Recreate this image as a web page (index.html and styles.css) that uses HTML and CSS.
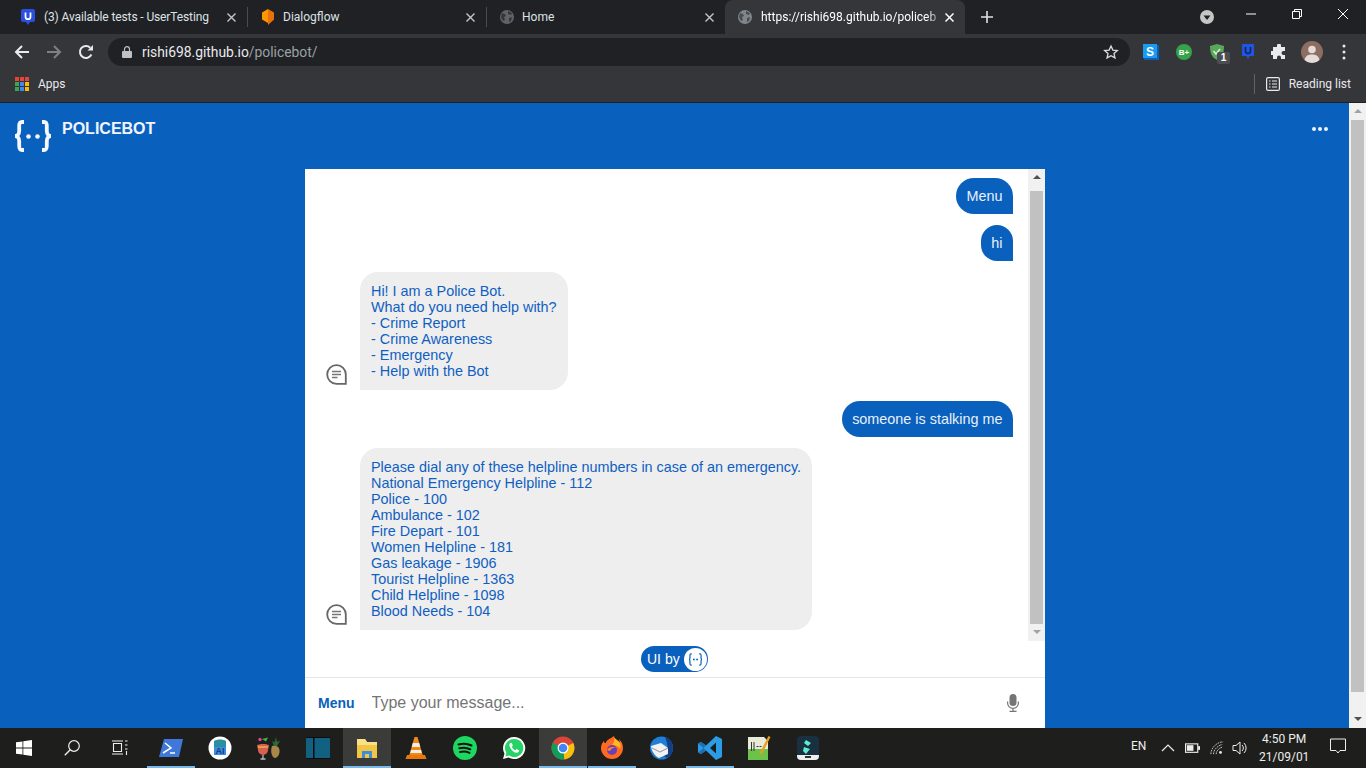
FILE: index.html
```html
<!DOCTYPE html>
<html lang="en">
<head>
  <meta charset="UTF-8" />
  <title>Policebot</title>
  <link rel="stylesheet" href="styles.css">
</head>
<body>

  <div class="tabstrip">
    <div class="tab first">
      <svg class="favicon" viewBox="0 0 14 16"><path d="M2 0h10a2 2 0 0 1 2 2v9a2 2 0 0 1-2 2H9l-2 3-2-3H2a2 2 0 0 1-2-2V2a2 2 0 0 1 2-2z" fill="#2b50e0"/><path d="M4.500 3.500v4.200a2.500 2.500 0 0 0 5 0V3.500" fill="none" stroke="#fff" stroke-width="1.700"/></svg>
      <span class="tab-title">(3) Available tests - UserTesting</span>
      <svg class="tab-close" viewBox="0 0 9 9"><path d="M.5.500l8 8M8.500.500l-8 8" stroke="#c4c7c5" stroke-width="1.400"/></svg>
    </div>
    <div class="tab-sep"></div>
    <div class="tab">
      <svg class="favicon" viewBox="0 0 14 16"><path d="M7 0l6 3.500v7L7 16z" fill="#e8710a"/><path d="M7 0L1 3.500v7L7 14z" fill="#ff9800"/></svg>
      <span class="tab-title">Dialogflow</span>
      <svg class="tab-close" viewBox="0 0 9 9"><path d="M.5.500l8 8M8.500.500l-8 8" stroke="#c4c7c5" stroke-width="1.400"/></svg>
    </div>
    <div class="tab-sep"></div>
    <div class="tab">
      <svg class="favicon" viewBox="0 0 14 14"><circle cx="7" cy="7" r="7" fill="#5f6368"/><path d="M2 3l3 1 1 2-2 1 1 3-2 1-2-4zM8 1l4 2-1 2-3-1zM9 8l3-1-1 4-2 1z" fill="#35363a"/></svg>
      <span class="tab-title">Home</span>
      <svg class="tab-close" viewBox="0 0 9 9"><path d="M.5.500l8 8M8.500.500l-8 8" stroke="#c4c7c5" stroke-width="1.400"/></svg>
    </div>
    <div class="tab active">
      <svg class="favicon" viewBox="0 0 14 14"><circle cx="7" cy="7" r="7" fill="#80868b"/><path d="M2 3l3 1 1 2-2 1 1 3-2 1-2-4zM8 1l4 2-1 2-3-1zM9 8l3-1-1 4-2 1z" fill="#4a4c50"/></svg>
      <span class="tab-title active-title">https://rishi698.github.io/policeb</span>
      <svg class="tab-close" viewBox="0 0 9 9"><path d="M.5.500l8 8M8.500.500l-8 8" stroke="#fff" stroke-width="1.500"/></svg>
    </div>
    <svg class="new-tab" viewBox="0 0 12 12"><path d="M6 0v12M0 6h12" stroke="#dee1e6" stroke-width="1.600"/></svg>
    <div class="window-controls">
      <svg class="profile-down" viewBox="0 0 14 14"><circle cx="7" cy="7" r="7" fill="#c4c7c5"/><path d="M3.500 5.500h7L7 10z" fill="#202124"/></svg>
      <svg class="win-btn" viewBox="0 0 10 10"><path d="M0 5h10" stroke="#fff"/></svg>
      <svg class="win-btn" viewBox="0 0 10 10"><path d="M.5 2.500h7v7h-7zM2.500 2.500v-2h7v7h-2" fill="none" stroke="#fff"/></svg>
      <svg class="win-btn" viewBox="0 0 10 10"><path d="M0 0l10 10M10 0L0 10" stroke="#fff"/></svg>
    </div>
  </div>

  <div class="toolbar">
    <svg class="nav-icon" viewBox="0 0 16 16"><path d="M15 8H2M8 2L2 8l6 6" fill="none" stroke="#e8eaed" stroke-width="2"/></svg>
    <svg class="nav-icon" viewBox="0 0 16 16"><path d="M1 8h13M8 2l6 6-6 6" fill="none" stroke="#7e8084" stroke-width="2"/></svg>
    <svg class="nav-icon" viewBox="0 0 16 16"><path d="M13.400 10.500A6 6 0 1 1 12.200 3.700" fill="none" stroke="#e8eaed" stroke-width="2"/><path d="M9.500 6.500H15V1z" fill="#e8eaed"/></svg>
    <div class="omnibox">
      <svg class="lock" viewBox="0 0 10 12"><path d="M2.500 5V3.200a2.500 2.500 0 0 1 5 0V5" fill="none" stroke="#bdc1c6" stroke-width="1.200"/><rect y="5" width="10" height="7" rx="1" fill="#bdc1c6"/></svg>
      <span class="url">rishi698.github.io<span class="url-path">/policebot/</span></span>
      <svg class="star" viewBox="0 0 24 24"><path d="M12 3l2.800 6.100 6.700.7-5 4.500 1.400 6.600L12 17.500 6.100 20.900l1.400-6.600-5-4.500 6.700-.7z" fill="none" stroke="#dadce0" stroke-width="2"/></svg>
    </div>
    <div class="extensions">
      <svg class="ext" viewBox="0 0 16 16"><rect x="1" y="1" width="15" height="15" fill="#0a5fb0"/><rect width="14" height="14" fill="#1a9af0"/><text x="7" y="11.500" class="ext-s">S</text></svg>
      <svg class="ext" viewBox="0 0 16 16"><circle cx="8" cy="8" r="8" fill="#34a34a"/><text x="8" y="11" class="ext-b">B+</text></svg>
      <div class="ext-badged">
        <svg class="ext" viewBox="0 0 16 16"><path d="M8 0l7 2c0 6-1 11-7 14C2 13 1 8 1 2z" fill="#5aa65a"/><path d="M4.500 7l2.500 3 4-5" fill="none" stroke="#d8f0d8" stroke-width="1.500"/></svg>
        <span class="badge">1</span>
      </div>
      <svg class="ext tight" viewBox="0 0 14 16"><path d="M1 0h12v12H8.500L7 15l-1.500-3H1z" fill="#2255dd"/><path d="M4.500 3v4a2.500 2.500 0 0 0 5 0V3" fill="none" stroke="#10245e" stroke-width="1.600"/></svg>
      <svg class="ext puzzle" viewBox="0 0 16 16"><path d="M6 1.500a2 2 0 0 1 4 0V3h4v4h-1.500a2 2 0 0 0 0 4H14v4H10v-1.500a2 2 0 0 0-4 0V15H2v-4H.5a2 2 0 0 1 0-4H2V3h4z" fill="#e8eaed"/></svg>
      <svg class="avatar" viewBox="0 0 22 22"><circle cx="11" cy="11" r="11" fill="#8d6e63"/><circle cx="11" cy="8.500" r="3.800" fill="#e4dcd8"/><path d="M3.500 19c1-4.500 4-5.500 7.500-5.500s6.500 1 7.500 5.500a11 11 0 0 1-15 0z" fill="#e4dcd8"/></svg>
      <svg class="kebab" viewBox="0 0 4 16"><circle cx="2" cy="2" r="1.500" fill="#e8eaed"/><circle cx="2" cy="8" r="1.500" fill="#e8eaed"/><circle cx="2" cy="14" r="1.500" fill="#e8eaed"/></svg>
    </div>
  </div>

  <div class="bookmarks">
    <svg class="apps" viewBox="0 0 14 14">
      <rect width="4" height="4" fill="#ea4335"/><rect x="5" width="4" height="4" fill="#ea4335"/><rect x="10" width="4" height="4" fill="#ea4335"/>
      <rect y="5" width="4" height="4" fill="#34a853"/><rect x="5" y="5" width="4" height="4" fill="#4285f4"/><rect x="10" y="5" width="4" height="4" fill="#fbbc04"/>
      <rect y="10" width="4" height="4" fill="#34a853"/><rect x="5" y="10" width="4" height="4" fill="#4285f4"/><rect x="10" y="10" width="4" height="4" fill="#fbbc04"/>
    </svg>
    <span class="bookmark-label">Apps</span>
    <div class="bookmark-sep"></div>
    <svg class="reading-icon" viewBox="0 0 14 14"><rect x=".6" y=".6" width="12.800" height="12.800" rx="1.500" fill="none" stroke="#e8eaed" stroke-width="1.200"/><path d="M3 4h1.500M6 4h5M3 7h1.500M6 7h5M3 10h1.500M6 10h5" stroke="#e8eaed" stroke-width="1.200"/></svg>
    <span class="reading-label">Reading list</span>
  </div>

  <div class="page">
    <div class="site">
      <div class="site-header">
        <svg class="logo" viewBox="0 0 38 32">
          <path d="M10 2H8C5.200 2 5.200 4 5.200 6.500V11c0 3-2 5-4.200 5 2.200 0 4.200 2 4.200 5v4.500c0 2.500 0 4.500 2.800 4.500h2M28 2h2c2.800 0 2.800 2 2.800 4.500V11c0 3 2 5 4.200 5-2.200 0-4.200 2-4.200 5v4.500c0 2.500 0 4.500-2.800 4.500h-2" fill="none" stroke="#f4f7fb" stroke-width="3.800"/>
          <circle cx="14.500" cy="16.500" r="2.300" fill="#f4f7fb"/><circle cx="23.500" cy="16.500" r="2.300" fill="#f4f7fb"/>
        </svg>
        <span class="site-name">POLICEBOT</span>
        <svg class="site-menu" viewBox="0 0 16 4"><circle cx="2" cy="2" r="2" fill="#eef3fa"/><circle cx="8" cy="2" r="2" fill="#eef3fa"/><circle cx="14" cy="2" r="2" fill="#eef3fa"/></svg>
      </div>

      <div class="chat-card">
        <div class="chat-scroll">
          <div class="messages">
            <div class="message you">Menu</div>
            <div class="message you">hi</div>
            <div class="bot-row">
              <svg class="bot-icon" viewBox="0 0 21 21"><path d="M10.500 1.200a9.300 9.300 0 1 0 0 18.600h9.300v-9.300a9.300 9.300 0 0 0-9.300-9.300z" fill="none" stroke="#666" stroke-width="1.800"/><path d="M6 7.500h9M6 10.500h9M6 13.500h5.500" stroke="#777" stroke-width="1.500"/></svg>
              <div class="message other">Hi! I am a Police Bot.<br>What do you need help with?<br>- Crime Report<br>- Crime Awareness<br>- Emergency<br>- Help with the Bot</div>
            </div>
            <div class="message you">someone is stalking me</div>
            <div class="bot-row">
              <svg class="bot-icon" viewBox="0 0 21 21"><path d="M10.500 1.200a9.300 9.300 0 1 0 0 18.600h9.300v-9.300a9.300 9.300 0 0 0-9.300-9.300z" fill="none" stroke="#666" stroke-width="1.800"/><path d="M6 7.500h9M6 10.500h9M6 13.500h5.500" stroke="#777" stroke-width="1.500"/></svg>
              <div class="message other">Please dial any of these helpline numbers in case of an emergency.<br>National Emergency Helpline - 112<br>Police - 100<br>Ambulance - 102<br>Fire Depart - 101<br>Women Helpline - 181<br>Gas leakage - 1906<br>Tourist Helpline - 1363<br>Child Helpline - 1098<br>Blood Needs - 104</div>
            </div>
          </div>
          <div class="scrollbar chat-bar">
            <div class="arrow-up dark"></div>
            <div class="thumb"></div>
            <div class="arrow-down"></div>
          </div>
        </div>
        <div class="credit-row">
          <div class="credit">
            <span>UI by</span>
            <span class="credit-logo">
              <svg viewBox="0 0 16 14"><path d="M4 1H3C2 1 2 2 2 3v2.500C2 6.500 1.500 7 1 7c.5 0 1 .5 1 1.500V11c0 1 0 2 1 2h1M12 1h1c1 0 1 1 1 2v2.500c0 1 .5 1.500 1 1.500-.5 0-1 .5-1 1.500V11c0 1 0 2-1 2h-1" fill="none" stroke="#0a60bd" stroke-width="1.300"/><circle cx="6.300" cy="7" r="1" fill="#0a60bd"/><circle cx="9.700" cy="7" r="1" fill="#0a60bd"/></svg>
            </span>
          </div>
        </div>
        <div class="input-row">
          <span class="menu-btn">Menu</span>
          <input class="msg-input" placeholder="Type your message..." />
          <svg class="mic" viewBox="0 0 12 18"><rect x="2.500" width="7" height="12" rx="3.500" fill="#757575"/><path d="M.6 7.500V9a5.400 5.400 0 0 0 10.800 0V7.500M6 14.500V17M2.500 17.400h7" fill="none" stroke="#757575" stroke-width="1.200"/></svg>
        </div>
      </div>
    </div>

    <div class="scrollbar page-bar">
      <div class="arrow-up"></div>
      <div class="thumb"></div>
      <div class="arrow-down dark"></div>
    </div>
  </div>

  <div class="taskbar">
    <div class="task sys"><svg class="task-icon small" viewBox="0 0 16 16"><path d="M0 2.300l6.500-.9v6.200H0zM7.300 1.300L16 0v7.600H7.300zM0 8.400h6.500v6.200L0 13.700zM7.300 8.400H16V16l-8.700-1.300z" fill="#fff"/></svg></div>
    <div class="task sys"><svg class="task-icon small" viewBox="0 0 16 16"><circle cx="10" cy="6" r="5.300" fill="none" stroke="#eee" stroke-width="1.200"/><path d="M6.200 9.800L.8 15.200" stroke="#eee" stroke-width="1.400"/></svg></div>
    <div class="task sys last"><svg class="task-icon small" viewBox="0 0 16 16"><path d="M1.500 3.500h8v8h-8zM0 1h11M0 14h11M13 1h2.500M13 5h2.500M13 9h2.500M14.500 11v4" fill="none" stroke="#eee" stroke-width="1.100"/></svg></div>
    <div class="task running"><svg class="task-icon" viewBox="0 0 24 24"><path d="M5 3h19l-4 18H0z" fill="#3f78d8"/><path d="M6 7l6 5-8 5M11 17h5" fill="none" stroke="#fff" stroke-width="1.500"/></svg></div>
    <div class="task"><svg class="task-icon" viewBox="0 0 24 24"><circle cx="12" cy="12" r="11.500" fill="#fff"/><path d="M6 5c3-2 9-2 12 0v6H6z" fill="#2a8f9f"/><path d="M6 11h12v8H6z" fill="#3d8ede"/><text x="12" y="18" class="ai-text">AI</text></svg></div>
    <div class="task"><svg class="task-icon" viewBox="0 0 24 24"><path d="M15 10c3-1.500 7 0 7.500 4 .5 4-2 8-4.500 8-3 0-5-7-3-12z" fill="#a8874a"/><path d="M17 10l-2-5 2.500 1.500L19 1l1 5 3-1.500-3 5.500z" fill="#2f6b35"/><path d="M0 9c3-1.500 9-1.500 12 0l-1 5a5 5 0 0 1-10 0z" fill="#d8604f"/><path d="M1 11h10" stroke="#e8b050" stroke-width="1.500"/><path d="M6 19v3.500M3.500 23h5" stroke="#bbb" stroke-width="1.300"/><circle cx="3" cy="3.500" r="1.700" fill="#e040a0"/><path d="M5 3l6-1.500-2 4z" fill="#46b34a"/></svg></div>
    <div class="task"><svg class="task-icon" viewBox="0 0 24 24"><rect width="24" height="22" y="1" fill="#0b0d10"/><rect y="2" width="7" height="20" fill="#136180"/><rect x="8.500" y="2" width="15.500" height="20" fill="#136180"/></svg></div>
    <div class="task hover running"><svg class="task-icon" viewBox="0 0 24 24"><path d="M2 3h8l2 3h10v16H2z" fill="#f3c544"/><path d="M2 3h8l2 3h10v3H2z" fill="#fbe08a"/><path d="M7 22v-7h10v7h-3v-4h-4v4z" fill="#3a8fd8"/></svg></div>
    <div class="task"><svg class="task-icon" viewBox="0 0 24 24"><path d="M10.500 1h3L19 20H5z" fill="#f28a12"/><path d="M8.800 7h6.400l1 4H7.800zM7 14h10l.8 3H6.200z" fill="#eee"/><path d="M3 19h18l1.500 4h-21z" fill="#e8780c"/></svg></div>
    <div class="task"><svg class="task-icon" viewBox="0 0 24 24"><circle cx="12" cy="12" r="12" fill="#1ed760"/><path d="M5.500 8.500c4-1.200 9-1 13 1M6.300 12.300c3.500-1 7.700-.8 11 1M7 16c3-.8 6.500-.6 9.500.8" fill="none" stroke="#111" stroke-width="2" stroke-linecap="round"/></svg></div>
    <div class="task"><svg class="task-icon" viewBox="0 0 24 24"><path d="M12 1a11 11 0 0 0-9.500 16.500L1 23l5.700-1.500A11 11 0 1 0 12 1z" fill="#fff"/><path d="M12 3a9 9 0 0 0-7.700 13.700l-.9 3.700 3.800-1A9 9 0 1 0 12 3z" fill="#25d366"/><path d="M8.500 6.800c-1.500 1-1.500 3 0 5.500s4 4.500 6 4.500 2.800-1.500 2.500-2.500l-2.500-1.300-1 1.200c-1.500-.5-3-2-3.700-3.500l1-1.200-1-2.500z" fill="#fff"/></svg></div>
    <div class="task hover running"><svg class="task-icon" viewBox="0 0 24 24"><circle cx="12" cy="12" r="11.500" fill="#db4437"/><path d="M12 12L22.300 7a11.500 11.500 0 0 1-9 16.400z" fill="#f4c20d"/><path d="M12 12l1.300 11.400A11.500 11.500 0 0 1 1.800 6.700z" fill="#0f9d58"/><circle cx="12" cy="12" r="5.500" fill="#fff"/><circle cx="12" cy="12" r="4.300" fill="#4285f4"/></svg></div>
    <div class="task running"><svg class="task-icon" viewBox="0 0 24 24"><path d="M14 0c0 3 4 4 6 7l-1-4c3 3 4 6 4 9a11 11 0 0 1-22 0c0-3 1-5 3-7 0 2 1 2 2 2 0-3 4-4 8-7z" fill="#ff6a20"/><path d="M14 0c0 3 4 4 6 7 1 2 1 4 0 6-2-3-5-4-8-4 2-2 3-6 2-9z" fill="#ffb81f"/><circle cx="12" cy="14" r="5" fill="#6a3fb8"/><path d="M7 14c2-3 6-4 9-2-2-1-5 0-6 3z" fill="#ff8a20"/></svg></div>
    <div class="task"><svg class="task-icon" viewBox="0 0 24 24"><circle cx="12.500" cy="12" r="11.500" fill="#1f7fd8"/><path d="M16 1a11.500 11.500 0 0 1 2 21l-3-2c4-3 5-10 1-19z" fill="#123f86"/><path d="M2 10l10-3 7 5v6l-9 4c-4-2-7-6-8-12z" fill="#f2f2f2"/><path d="M3 12l8 4 8-4" fill="none" stroke="#778" stroke-width=".8"/></svg></div>
    <div class="task running"><svg class="task-icon" viewBox="0 0 24 24"><path d="M18 0l6 3v18l-6 3-10-9.500L3 18l-3-1.500v-9L3 6l5 3.500z" fill="#2b9ce6"/><path d="M18 6.500l-6 5.500 6 5.500z" fill="#1e1f1c"/><path d="M0 7.500l3-1.500 5 3.500-2.500 2.500zM0 16.500l5.500-4.500L8 14.500 3 18z" fill="#1c6fb3"/></svg></div>
    <div class="task"><svg class="task-icon" viewBox="0 0 24 24"><path d="M1 1h16l4 4v19H1z" fill="#e8ebd8"/><path d="M1 13h20v11H1z" fill="#6cc24a"/><path d="M4 6h1v9H4zM6.500 6h1v9h-1zM9.500 10h2v1h-2zM12.500 10h2v1h-2z" fill="#333"/><path d="M21.500 0l2 1-8 16-3 2 1-3.500z" fill="#e8a020"/></svg></div>
    <div class="task"><svg class="task-icon" viewBox="0 0 24 24"><rect x="1" y="0" width="22" height="24" rx="4" fill="#18303f"/><path d="M10 4l5 3-3 3-4-3zM8 11l6 2-4 5-3-3z" fill="#5eead4"/><path d="M1 19h22v1a4 4 0 0 1-4 4H5a4 4 0 0 1-4-4z" fill="#eee"/><rect x="9" y="20" width="6" height="2" fill="#333"/></svg></div>
    <div class="tray">
      <span class="tray-lang">EN</span>
      <svg class="tray-icon caret" viewBox="0 0 14 14"><path d="M1 10l6-6 6 6" fill="none" stroke="#eee" stroke-width="1.200"/></svg>
      <svg class="tray-icon battery" viewBox="0 0 16 14"><rect x=".6" y="2.600" width="13" height="9" fill="none" stroke="#eee" stroke-width="1.200"/><rect x="2" y="4" width="7" height="6" fill="#eee"/><rect x="14" y="5" width="2" height="4" fill="#eee"/></svg>
      <svg class="tray-icon wifi" viewBox="0 0 16 16"><path d="M1 15C1 8 8 1 15 1M4 15c0-5 5-10 10-11M7 15c0-3 3-7 7-8" fill="none" stroke="#ddd" stroke-width="1" stroke-dasharray="2 1"/><circle cx="12" cy="13" r="1.600" fill="#eee"/></svg>
      <svg class="tray-icon volume" viewBox="0 0 16 16"><path d="M1 5.500h3L8 2v12l-4-3.500H1z" fill="none" stroke="#eee"/><path d="M10 5a4 4 0 0 1 0 6M12 3a7 7 0 0 1 0 10" fill="none" stroke="#eee"/></svg>
      <div class="clock"><span>4:50 PM</span><span>21/09/01</span></div>
      <svg class="notify" viewBox="0 0 16 16"><path d="M.5 1h15v11.500H10L8 15l-2-2.500H.5z" fill="none" stroke="#eee"/></svg>
    </div>
  </div>

</body>
</html>
```

FILE: styles.css
```css
html, body {
  margin: 0;
  padding: 0;
  height: 768px;
  overflow: hidden;
}

body {
  display: flex;
  flex-direction: column;
  font-family: "Liberation Sans", Arial, sans-serif;
  background: #0a60bd;
}

/* browser tabs */
.tabstrip {
  display: flex;
  align-items: center;
  height: 34px;
  padding-left: 8px;
  background: #202124;
  font-family: Roboto, sans-serif;
  font-size: 12px;
  color: #dee1e6;
}

.tab {
  display: flex;
  align-items: center;
  width: 238px;
  height: 34px;
  box-sizing: border-box;
  padding: 0 11px 0 13px;
  flex-shrink: 0;
}

.tab.first {
  width: 239px;
}

.tab.first .tab-title {
  margin-left: 9px;
  letter-spacing: -0.12px;
}

.tab.active {
  width: 240px;
  background: #35363a;
  border-radius: 8px 8px 0 0;
  color: #fff;
}

.tab.active .tab-title {
  margin-left: 9px;
}

.tab-sep {
  width: 1px;
  height: 20px;
  background: #4a4b4f;
  flex-shrink: 0;
}

.favicon {
  width: 14px;
  height: 16px;
  flex-shrink: 0;
}

.tab-title {
  margin-left: 8px;
  flex: 1;
  white-space: nowrap;
}

.active-title {
  -webkit-mask-image: linear-gradient(to right, #000 90%, transparent);
  mask-image: linear-gradient(to right, #000 90%, transparent);
}

.tab-close {
  width: 9px;
  height: 9px;
  flex-shrink: 0;
}

.new-tab {
  width: 12px;
  height: 12px;
  margin-left: 16px;
}

.window-controls {
  display: flex;
  align-items: center;
  margin-left: auto;
  height: 34px;
}

.profile-down {
  width: 14px;
  height: 14px;
  margin-right: 32px;
}

.win-btn {
  width: 10px;
  height: 10px;
  margin-top: -6px;
  margin-right: 36px;
}

.win-btn:last-child {
  margin-right: 18px;
}

/* address bar */
.toolbar {
  display: flex;
  align-items: center;
  height: 36px;
  padding-left: 14px;
  background: #35363a;
}

.nav-icon {
  width: 16px;
  height: 16px;
  margin-right: 16px;
}

.omnibox {
  display: flex;
  align-items: center;
  width: 1022px;
  height: 28px;
  margin: 0 0 0 -2px;
  padding: 0 11px 0 14px;
  box-sizing: border-box;
  background: #202124;
  border-radius: 14px;
}

.lock {
  width: 10px;
  height: 12px;
}

.url {
  margin-left: 10px;
  font-family: Roboto, sans-serif;
  font-size: 13.85px;
  color: #e8eaed;
}

.url-path {
  color: #9aa0a6;
}

.star {
  width: 16px;
  height: 16px;
  margin-left: auto;
}

.extensions {
  display: flex;
  align-items: center;
  margin-left: 13px;
}

.ext {
  display: block;
  width: 16px;
  height: 16px;
  margin-right: 17px;
}

.ext-badged .ext,
.ext.tight {
  margin-right: 15px;
}

.ext.puzzle {
  margin-right: 16px;
}

.ext-s {
  font: bold 12px "Liberation Sans", sans-serif;
  fill: #fff;
  text-anchor: middle;
}

.ext-b {
  font: bold 8px "Liberation Sans", sans-serif;
  fill: #fff;
  text-anchor: middle;
}

.ai-text {
  font: bold 9px "Liberation Sans", sans-serif;
  fill: #123f86;
  text-anchor: middle;
}

.ext-badged {
  position: relative;
}

.badge {
  position: absolute;
  top: 8px;
  left: 8px;
  width: 13px;
  height: 12px;
  background: #4c4d50;
  border-radius: 2px;
  font-size: 10px;
  font-weight: bold;
  line-height: 12px;
  text-align: center;
  color: #fff;
}

.avatar {
  width: 22px;
  height: 22px;
  margin-left: -2px;
  margin-right: 19px;
}

.kebab {
  width: 4px;
  height: 16px;
}

/* bookmarks */
.bookmarks {
  display: flex;
  align-items: center;
  height: 33px;
  box-sizing: border-box;
  padding: 0 15px 4px;
  background: #35363a;
  border-bottom: 1px solid #1f2023;
  font-family: Roboto, sans-serif;
  font-size: 12px;
  color: #e8eaed;
}

.apps {
  width: 14px;
  height: 14px;
}

.bookmark-label {
  margin-left: 9px;
}

.bookmark-sep {
  width: 1px;
  height: 20px;
  margin-left: auto;
  background: #5f6368;
}

.reading-icon {
  width: 14px;
  height: 14px;
  margin-left: 11px;
}

.reading-label {
  margin-left: 9px;
}

/* page */
.page {
  display: flex;
  height: 625px;
  background: #0a60bd;
}

.site {
  flex: 1;
  display: flex;
  flex-direction: column;
}

.site-header {
  display: flex;
  align-items: flex-start;
  height: 66px;
  box-sizing: border-box;
  padding: 17px 21px 0 14px;
}

.logo {
  width: 38px;
  height: 32px;
  overflow: visible;
}

.site-name {
  margin-left: 10px;
  font-size: 16px;
  font-weight: bold;
  line-height: 18px;
  color: #f1f5fa;
}

.site-menu {
  width: 16px;
  height: 4px;
  margin-left: auto;
  margin-top: 7px;
}

.chat-card {
  flex: 1;
  display: flex;
  flex-direction: column;
  width: 740px;
  margin-left: 305px;
  background: #fff;
}

.chat-scroll {
  display: flex;
  height: 472px;
  overflow: hidden;
}

.messages {
  flex: 1;
  display: flex;
  flex-direction: column;
  align-items: flex-end;
  gap: 11px;
  box-sizing: border-box;
  padding: 9px 15px 0 21px;
}

.message {
  padding: 11px;
  border-radius: 18px;
  font-size: 14.4px;
  line-height: 16px;
}

.you {
  padding: 10px 10.5px;
  background: #0a60bd;
  color: #e8f0fa;
  border-bottom-right-radius: 0;
}

.other {
  background: #eeeeee;
  color: #0f5fc2;
  border-bottom-left-radius: 0;
}

.bot-row {
  display: flex;
  align-items: flex-end;
  align-self: flex-start;
}

.bot-icon {
  width: 21px;
  height: 21px;
  margin: 0 13px 5px 0;
  flex-shrink: 0;
}

/* scrollbars */
.scrollbar {
  display: flex;
  flex-direction: column;
  align-items: center;
  width: 17px;
  background: #f1f1f1;
}

.thumb {
  flex: 1;
  width: 13px;
  background: #c1c1c1;
}

.arrow-up,
.arrow-down {
  width: 0;
  height: 0;
  border-left: 4px solid transparent;
  border-right: 4px solid transparent;
}

.arrow-up {
  margin: 6px 0 7px;
  border-bottom: 4px solid #a3a3a3;
}

.arrow-up.dark {
  margin: 6px 0 12px;
  border-bottom-color: #505050;
}

.arrow-down {
  margin: 6px 0 7px;
  border-top: 4px solid #a3a3a3;
}

.arrow-down.dark {
  margin: 25px 0 7px;
  border-top-color: #505050;
}

/* credit and input */
.credit-row {
  display: flex;
  justify-content: center;
  align-items: center;
  height: 37px;
  box-sizing: border-box;
  border-bottom: 1px solid #e6e6e6;
}

.credit {
  display: flex;
  align-items: center;
  width: 67px;
  height: 26px;
  margin-right: 1px;
  box-sizing: border-box;
  padding: 0 1px 0 6px;
  border-radius: 13px;
  background: #0a60bd;
  font-size: 14px;
  color: #fff;
}

.credit-logo {
  display: flex;
  align-items: center;
  justify-content: center;
  width: 23px;
  height: 23px;
  margin-left: auto;
  border-radius: 50%;
  background: #fff;
}

.credit-logo svg {
  width: 15px;
  height: 13px;
}

.input-row {
  flex: 1;
  display: flex;
  align-items: center;
  padding: 0 26px 0 13px;
}

.menu-btn {
  font-size: 14px;
  font-weight: bold;
  color: #0a60bd;
}

.msg-input {
  flex: 1;
  margin-left: 17px;
  padding: 0;
  border: none;
  outline: none;
  font-family: "Liberation Sans", Arial, sans-serif;
  font-size: 16px;
}

.msg-input::placeholder {
  color: #757575;
}

.mic {
  width: 12px;
  height: 18px;
}

/* windows taskbar */
.taskbar {
  display: flex;
  height: 40px;
  background: #1e1f1c;
  color: #eee;
  font-family: Roboto, sans-serif;
  font-size: 12px;
}

.task {
  display: flex;
  align-items: center;
  justify-content: center;
  width: 48px;
  height: 40px;
  margin-right: 1px;
  box-sizing: border-box;
  flex-shrink: 0;
}

.task.sys {
  margin-right: 0;
}

.task.sys.last {
  margin-right: 3px;
}

.task.hover {
  background: #3b3c3a;
}

.task.running {
  border-bottom: 2px solid #76b9ed;
  padding-top: 2px;
}

.task-icon {
  width: 24px;
  height: 24px;
}

.task-icon.small {
  width: 16px;
  height: 16px;
}

.tray {
  flex: 1;
  display: flex;
  align-items: center;
  padding-left: 298px;
}

.tray-lang {
  width: 24px;
  margin-top: -5px;
}

.tray-icon {
  width: 14px;
  height: 14px;
  margin-left: 10px;
}

.tray-icon.caret {
  margin-left: 6px;
}

.tray-icon.battery {
  width: 15px;
}

.tray-icon.volume {
  width: 16px;
  height: 16px;
  margin-left: 8px;
}

.clock {
  display: flex;
  flex-direction: column;
  align-items: center;
  gap: 2px;
  margin-left: 11px;
  line-height: 16px;
}

.notify {
  width: 16px;
  height: 16px;
  margin-left: 21px;
  margin-top: -4px;
}
```
